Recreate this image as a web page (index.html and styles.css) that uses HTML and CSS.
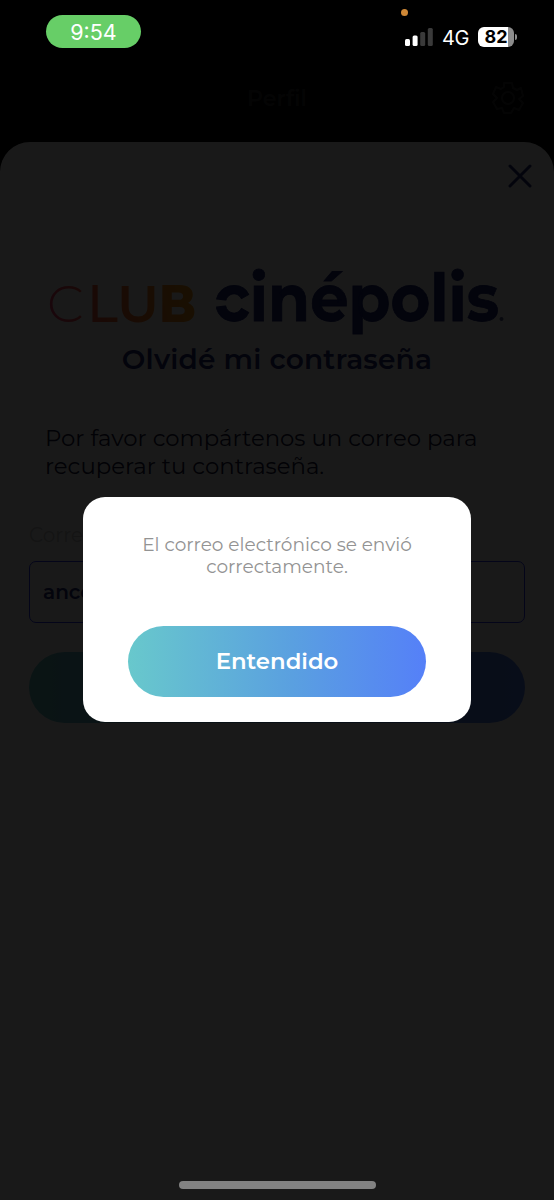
FILE: index.html
```html
<!DOCTYPE html>
<html lang="es">
<head>
    <meta charset="UTF-8">
    <meta name="viewport" content="width=device-width, initial-scale=1.0">
    <title>Club Cinépolis - Olvidé mi contraseña</title>
    <link rel="stylesheet" href="styles.css">
</head>
<body>
    <!-- Status bar -->
    <div class="status-bar">
        <span class="time">9:54</span>
        <span class="mic-dot"></span>
        <div class="status-icons">
            <svg class="signal" width="28" height="18" viewBox="0 0 28 18">
                <rect x="0" y="11" width="5" height="7" rx="1.5" fill="#fff"/>
                <rect x="7.6" y="7.5" width="5" height="10.5" rx="1.5" fill="#fff"/>
                <rect x="15.2" y="4" width="5" height="14" rx="1.5" fill="#3a3a3a"/>
                <rect x="22.8" y="0" width="5" height="18" rx="1.5" fill="#3a3a3a"/>
            </svg>
            <span class="network">4G</span>
            <div class="battery"><span>82</span></div>
            <span class="battery-tip"></span>
        </div>
    </div>

    <!-- Page header -->
    <header class="nav">
        <span></span>
        <h1>Perfil</h1>
        <svg class="gear" width="32" height="34" viewBox="0 0 32 34" fill="none" stroke="#303030" stroke-width="2" stroke-linejoin="round">
            <path d="M12 2h8l1 5 4 2 4-2 2 8-4 3 4 4-4 7-5-2-3 5h-7l-2-5-5 1-4-7 4-4-4-4 3-7 5 2 3-2z"/>
            <circle cx="16" cy="17" r="6"/>
        </svg>
    </header>

    <!-- Password recovery sheet -->
    <main class="sheet">
        <svg class="close" width="24" height="24" viewBox="0 0 24 24" fill="none" stroke="#1e2878" stroke-width="3" stroke-linecap="round">
            <path d="M2 2l20 20M22 2L2 22"/>
        </svg>

        <svg class="logo" width="460" height="76" viewBox="0 0 460 76">
            <defs>
                <linearGradient id="clubColors" gradientUnits="userSpaceOnUse" x1="0" y1="58" x2="146" y2="20">
                    <stop offset="0" stop-color="#ff3c78"/>
                    <stop offset="0.4" stop-color="#ff6432"/>
                    <stop offset="1" stop-color="#ffa014"/>
                </linearGradient>
            </defs>
            <g class="club" fill="url(#clubColors)">
                <text x="-1" y="57" font-weight="300">C</text>
                <text x="39" y="57" font-weight="500">L</text>
                <text x="69" y="57" font-weight="600" textLength="42" lengthAdjust="spacingAndGlyphs">U</text>
                <text x="111" y="57" font-weight="800" textLength="37" lengthAdjust="spacingAndGlyphs">B</text>
            </g>
            <text class="cinepolis" x="166" y="56" textLength="285" lengthAdjust="spacingAndGlyphs">cinépolis</text>
            <path d="M164 34l17 2 6 2-6 2-17 2z" fill="#fff"/>
            <circle cx="453.500" cy="54" r="2" fill="#505a8c"/>
        </svg>

        <h2>Olvidé mi contraseña</h2>
        <p class="intro">Por favor compártenos un correo para<br>recuperar tu contraseña.</p>

        <form class="recover-form">
            <label for="email">Correo</label>
            <div class="field" id="email">ance</div>
            <div class="submit"></div>
        </form>
    </main>

    <!-- Confirmation dialog -->
    <div class="overlay">
        <div class="modal">
            <p>El correo electrónico se envió<br>correctamente.</p>
            <button type="button">Entendido</button>
        </div>
    </div>
    <div class="home-indicator"></div>
</body>
</html>
```
FILE: styles.css
```css
* {
    box-sizing: border-box;
}
body {
    margin: 0;
    height: 1200px;
    overflow: hidden;
    display: flex;
    flex-direction: column;
    background: #000;
    font-family: Montserrat, 'Inter', sans-serif;
}
h1, h2, p {
    margin: 0;
}

/* Status bar */
.status-bar {
    position: relative;
    z-index: 2;
    height: 62px;
    padding: 15px 37px 0 46px;
    display: flex;
    justify-content: space-between;
    align-items: flex-start;
    color: #fff;
    font-family: 'Inter', sans-serif;
}
.time {
    width: 95px;
    height: 33px;
    border-radius: 17px;
    background: #67ce67;
    font-size: 21.5px;
    font-weight: 400;
    line-height: 34px;
    text-align: center;
}
.mic-dot {
    position: absolute;
    left: 401px;
    top: 9px;
    width: 7px;
    height: 7px;
    border-radius: 50%;
    background: #cf8836;
}
.status-icons {
    display: flex;
    align-items: center;
    padding-top: 11px;
    height: 33px;
}
.network {
    margin: 2px 9px 0 9px;
    font-size: 20px;
    letter-spacing: -0.4px;
}
.battery {
    width: 36px;
    height: 20px;
    border-radius: 6px;
    background: linear-gradient(to right, #fff 82%, #8c8c8c 82%);
    color: #000;
    font-size: 18px;
    font-weight: 700;
    line-height: 20px;
    text-align: center;
}
.battery-tip {
    width: 2px;
    height: 6px;
    margin-left: 1px;
    border-radius: 0 2px 2px 0;
    background: #8c8c8c;
}

/* Header */
.nav {
    height: 80px;
    padding: 0 30px;
    display: grid;
    grid-template-columns: 1fr auto 1fr;
    align-items: center;
}
.nav h1 {
    color: #303030;
    font-size: 22px;
    font-weight: 600;
    margin-bottom: 8px;
}
.gear {
    justify-self: end;
    margin-bottom: 8px;
}

/* Sheet */
.sheet {
    flex: 1;
    display: flex;
    flex-direction: column;
    background: #fff;
    border-radius: 30px 30px 0 0;
    color: #1e2878;
}
.close {
    align-self: flex-end;
    margin: 22px 22px 0 0;
}
.logo {
    margin: 77px 0 0 48px;
    overflow: visible;
}
.club {
    font-size: 52px;
}
.cinepolis {
    font-size: 65px;
    font-weight: 700;
    fill: #1e2878;
    stroke: #1e2878;
    stroke-width: 0.8px;
}
.sheet h2 {
    font-size: 28px;
    font-weight: 600;
    line-height: 36px;
    text-align: center;
    letter-spacing: 0.2px;
}
.intro {
    margin: 47px 0 0 45px;
    color: #14143c;
    font-size: 22.8px;
    line-height: 28px;
}
.recover-form {
    margin: 43px 29px 0;
}
.recover-form label {
    display: block;
    height: 38px;
    color: #c8c8c8;
    font-size: 20px;
    line-height: 24px;
}
.field {
    height: 62px;
    padding-left: 13px;
    border: 1.5px solid #2832ff;
    border-radius: 7px;
    font-size: 20px;
    font-weight: 600;
    line-height: 60px;
}
.submit {
    height: 71px;
    margin-top: 29px;
    border-radius: 36px;
    background: linear-gradient(to right, #68c8cc, #5580f8);
}

/* Dialog */
.overlay {
    position: absolute;
    inset: 0;
    display: flex;
    flex-direction: column;
    align-items: center;
    padding-top: 497px;
    background: rgba(0, 0, 0, 0.9);
}
.modal {
    width: 388px;
    height: 225px;
    padding: 37px 45px 25px;
    display: flex;
    flex-direction: column;
    justify-content: space-between;
    border-radius: 22px;
    background: #fff;
    text-align: center;
}
.modal p {
    color: #939393;
    font-size: 18.5px;
    font-weight: 400;
    line-height: 22px;
    white-space: nowrap;
}
.modal button {
    height: 71px;
    padding-bottom: 2px;
    border: none;
    border-radius: 36px;
    background: linear-gradient(to right, #68c8cc, #5aa0e0 55%, #5580f8);
    color: #fff;
    font-family: inherit;
    font-size: 22.8px;
    font-weight: 600;
}
.home-indicator {
    position: absolute;
    left: 179px;
    bottom: 11px;
    width: 197px;
    height: 8px;
    border-radius: 4px;
    background: #828282;
}
```
